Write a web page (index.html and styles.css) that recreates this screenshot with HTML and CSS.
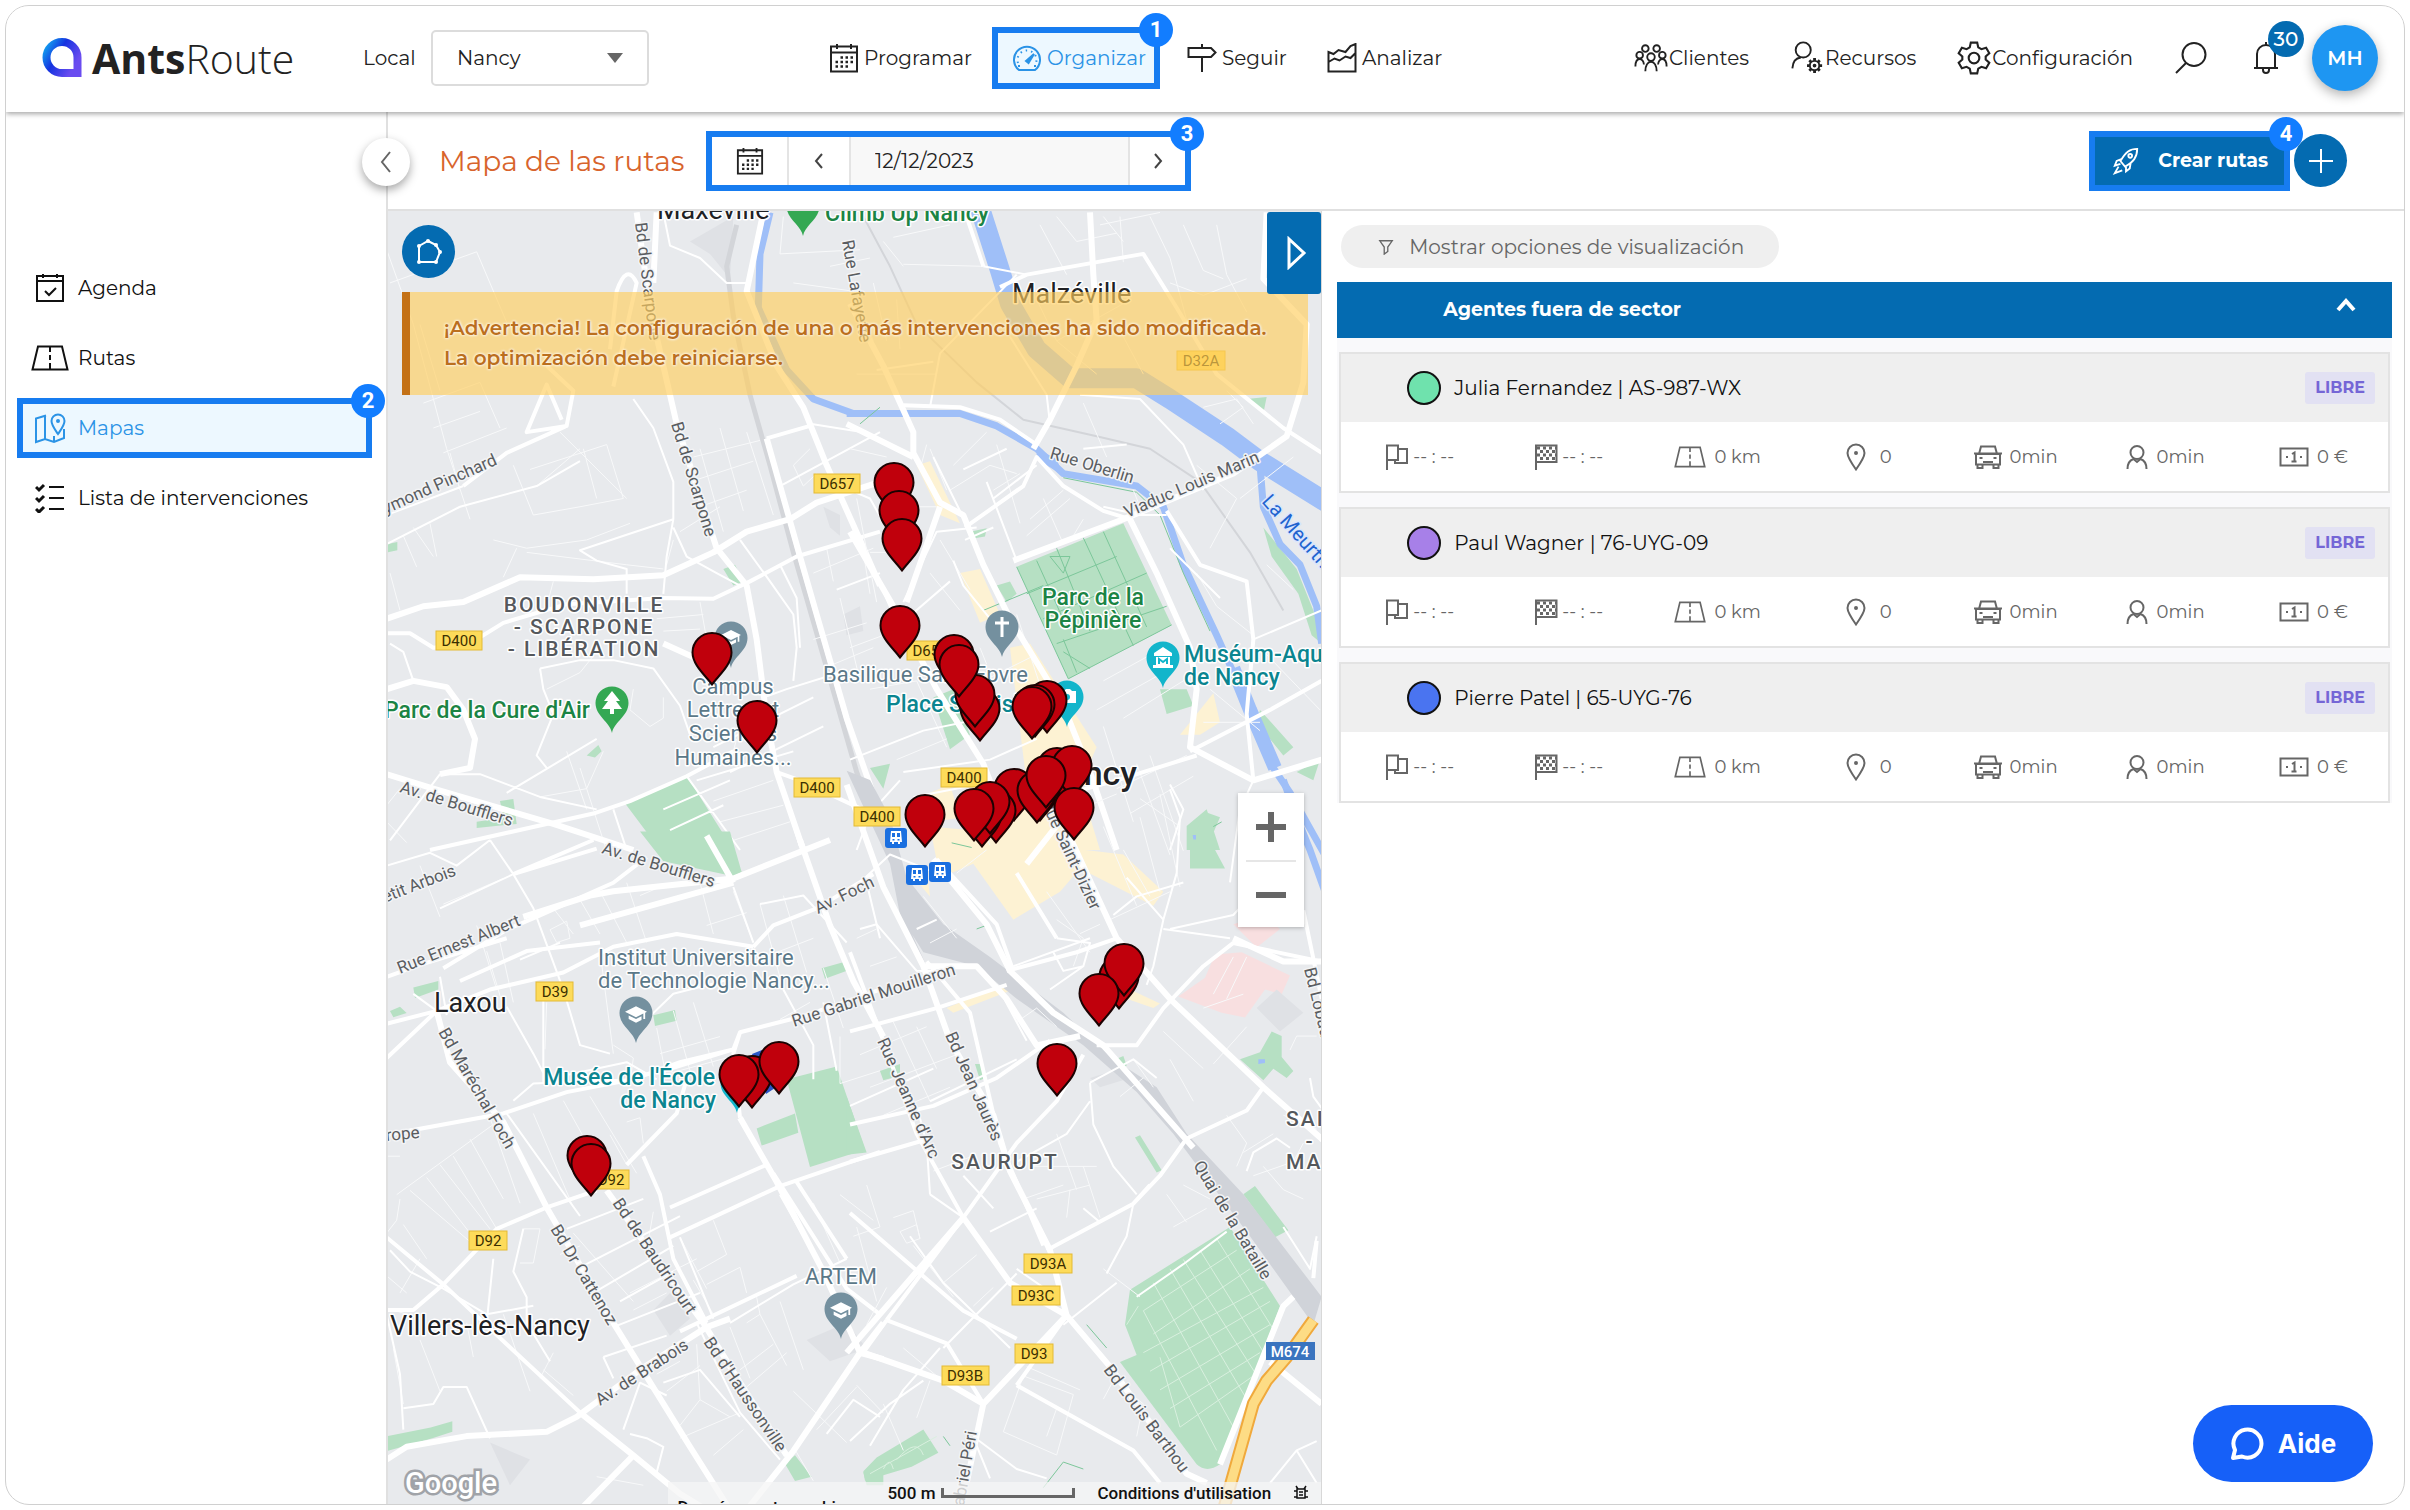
FILE: index.html
```html
<!DOCTYPE html>
<html lang="es">
<head>
<meta charset="utf-8">
<meta name="viewport" content="width=device-width, initial-scale=1">
<title>AntsRoute – Mapa de las rutas</title>
<link rel="stylesheet" href="styles.css">
</head>
<body>
<svg class="defs" aria-hidden="true">
  <defs>
    <linearGradient id="logo-grad" x1="0" y1="0" x2="1" y2="0.6">
      <stop offset="0" stop-color="#12a5f0"/><stop offset=".45" stop-color="#1533e0"/><stop offset="1" stop-color="#6a4cf0"/>
    </linearGradient>
    <symbol id="i-calendar" viewBox="0 0 30 30"><path d="M2 3.500h26v25H2zM2 9.500h26M8 1v5M22 1v5" /><path stroke-dasharray="2.500 2.500" stroke-width="2.500" d="M11.500 14.500h13M6.500 19h18M6.500 23.500h13"/></symbol>
    <symbol id="i-gauge" viewBox="0 0 30 30"><path d="M7 27h16a13 13 0 1 0-16 0z"/><path stroke-dasharray="1.500 4" d="M6 20a9.500 9.500 0 1 1 18 0"/><path d="M14 18l8-7-5.500 9z" fill="currentColor"/><path d="M6 23h2M22 23h2"/></symbol>
    <symbol id="i-sign" viewBox="0 0 30 30"><path d="M1.500 5H24l4.500 4.500L24 14H1.500zM15 1v4M15 14v15"/></symbol>
    <symbol id="i-chart" viewBox="0 0 30 30"><path d="M1.500 28.500V9l5 2 5-4 7 2 5-6 5-2v27.500zM1.500 19l6-3.500 5 2 6-4 5 1.500 5-5"/></symbol>
    <symbol id="i-group" viewBox="0 0 36 30"><circle cx="12" cy="5" r="3.500"/><circle cx="24" cy="5" r="3.500"/><circle cx="6" cy="12" r="3.500"/><circle cx="18" cy="14" r="4"/><circle cx="30" cy="12" r="3.500"/><path d="M1.500 24c0-5 2-8 4.500-8s4.500 3 4.500 6M34.500 24c0-5-2-8-4.500-8s-4.500 3-4.500 6M12 29c0-6 2.500-10 6-10s6 4 6 10"/></symbol>
    <symbol id="i-usergear" viewBox="0 0 34 36"><circle cx="13" cy="9.500" r="8"/><path d="M1.500 29c.5-8 4-11 9-11.500"/><circle cx="25" cy="26" r="5"/><circle cx="25" cy="26" r="1"/><path stroke-width="3" d="M25 18v3M25 31v3M17 26h3M30 26h3M19.500 20.500l2 2M28.500 29.500l2 2M30.500 20.500l-2 2M21.500 29.500l-2 2"/></symbol>
    <symbol id="i-gear" viewBox="0 0 32 32"><circle cx="16" cy="16" r="5"/><path d="M13 1.500h6l1 4.500 3 1.700 4.400-1.400 3 5.200L27 14.500v3l3.400 3-3 5.200L23 24.300 20 26l-1 4.500h-6L12 26l-3-1.700-4.400 1.400-3-5.200 3.400-3v-3l-3.400-3 3-5.200L9 7.700 12 6z"/></symbol>
    <symbol id="i-search" viewBox="0 0 34 34"><circle cx="20" cy="13.500" r="11.500"/><path d="M12 22L2 32"/></symbol>
    <symbol id="i-bell" viewBox="0 0 28 34"><path d="M2 27h24M5 27V13a9 9 0 0 1 18 0v14M14 4V1M11 27v2a3 3 0 0 0 6 0v-2"/></symbol>
    <symbol id="i-agenda" viewBox="0 0 30 30"><path d="M2 3h26v25H2zM2 8h26M8 1v4M22 1v4M10 18l4 4 7-7"/></symbol>
    <symbol id="i-road" viewBox="0 0 38 26"><path d="M7 1.500h24l5.500 23h-35z"/><path d="M19 2v5M19 10v5M19 18v6"/></symbol>
    <symbol id="i-map" viewBox="0 0 32 32"><path d="M12 3.500L2 6.500V30l9-3 9 3 10-4V17M11 4v23M20 30v-6"/><path d="M24 22c-4-6-6.500-9-6.500-13a6.500 6.500 0 0 1 13 0c0 4-2.500 7-6.500 13z"/><circle cx="24" cy="9" r="1"/></symbol>
    <symbol id="i-list" viewBox="0 0 30 30"><path d="M14 4h15M14 15h15M14 26h15"/><path stroke-width="3" d="M1 4l3 3 5-5M1 15l3 3 5-5M1 26l3 3 5-5"/></symbol>
    <symbol id="i-rocket" viewBox="0 0 28 30"><path d="M26 2c-8 0-12 3-18 13l5 6C22 16 26 11 26 2zM9 13l-5 2-2 5 6-2M14 20l0 6 4-3 1-6M6 21l-4 7 8-3"/><circle cx="18.500" cy="9.500" r="2"/></symbol>
    <symbol id="i-filter" viewBox="0 0 16 18"><path stroke-width="1.500" d="M1 2h14L10 9v5l-4 3V9z"/></symbol>
    <symbol id="i-flag" viewBox="0 0 24 26"><path d="M2 26V1.500h11V16H2M13 5h9v14H10v-3"/></symbol>
    <symbol id="i-finish" viewBox="0 0 24 26"><path d="M2 26V1.500h20.500V18H2"/><path stroke-width="3" stroke-dasharray="3 3" d="M3 4h19M6 7.500h16M3 11h19M6 14.500h16"/></symbol>
    <symbol id="i-spot" viewBox="0 0 20 28"><path d="M10 26.500C4 18 1.500 14 1.500 10a8.500 8.500 0 0 1 17 0c0 4-2.500 8-8.500 16.500z"/><circle cx="10" cy="10" r="1"/></symbol>
    <symbol id="i-car" viewBox="0 0 28 24"><path d="M5 9l2-7.500h14L23 9M2 9h24v10.500H2zM0 8.500h28M3.500 20v3h5v-3M19.500 20v3h5v-3M9 17h10M5.500 13h3M19.500 13h3"/></symbol>
    <symbol id="i-person" viewBox="0 0 22 26"><circle cx="11" cy="8.500" r="6.500"/><path d="M1.500 25c0-6 3-9 6-10l3.500 3 3.500-3c3 1 6 4 6 10"/></symbol>
    <symbol id="i-cash" viewBox="0 0 30 20"><path d="M1.500 1.500h27v17h-27zM13 7l2.500-1.500V14M12.500 14.500h5M7 10h2M21 10h2"/></symbol>
    <path id="pin" d="M21 52.500C15 44 1.500 33 1.500 20.500a19.500 19.500 0 0 1 39 0C40.500 33 27 44 21 52.500z" fill="#c0000c" stroke="#1c0202" stroke-width="2"/>
    <symbol id="poi" viewBox="0 0 34 48"><path d="M17 47C15 36 .5 30 .5 17a16.500 16.500 0 0 1 33 0C33.500 30 19 36 17 47z" fill="currentColor"/></symbol>
    <symbol id="cap" viewBox="0 0 24 18"><path fill="#fff" d="M12 0l12 6-2 1v7h-2V8l-8 4L0 6zM4 10l8 4 6-3v4l-6 3-8-4z"/></symbol>
    <symbol id="bus" viewBox="0 0 22 20"><rect width="22" height="20" rx="3" fill="#1a6fe0"/><path fill="#fff" d="M6 3h10l1 11h-2v2h-2v-2H9v2H7v-2H5z"/><path fill="#1a6fe0" d="M7 5h3v4H7zM12 5h3v4h-3zM7.500 11h2v1.500h-2zM12.500 11h2v1.500h-2z"/></symbol>
  </defs>
</svg>

<div class="app">
  <header class="topbar">
    <a class="logo" href="#">
      <svg width="40" height="40" viewBox="0 0 40 40" aria-hidden="true"><path d="M35 35H20A15.500 15.500 0 1 1 35.500 19.500V35z" fill="none" stroke="url(#logo-grad)" stroke-width="8"/></svg>
      <span><b>Ants</b>Route</span>
    </a>
    <label class="local" for="local">Local</label>
    <span class="select"><select id="local"><option>Nancy</option></select></span>
    <nav class="mainnav">
      <a href="#"><svg class="icon i30"><use href="#i-calendar"/></svg>Programar</a>
      <a href="#" class="active marked"><svg class="icon i30"><use href="#i-gauge"/></svg>Organizar<span class="step">1</span></a>
      <a href="#"><svg class="icon i30"><use href="#i-sign"/></svg>Seguir</a>
      <a href="#"><svg class="icon i30"><use href="#i-chart"/></svg>Analizar</a>
    </nav>
    <nav class="sidenav">
      <a href="#"><svg class="icon i34"><use href="#i-group"/></svg>Clientes</a>
      <a href="#"><svg class="icon i34"><use href="#i-usergear"/></svg>Recursos</a>
      <a href="#"><svg class="icon i34"><use href="#i-gear"/></svg>Configuración</a>
      <button class="plain" aria-label="Buscar"><svg class="icon i34"><use href="#i-search"/></svg></button>
      <button class="plain bell" aria-label="Notificaciones"><svg class="icon i34"><use href="#i-bell"/></svg><span class="count">30</span></button>
      <button class="avatar">MH</button>
    </nav>
  </header>

  <div class="body">
    <aside class="sidebar">
      <button class="collapse" aria-label="Contraer menú"><svg width="14" height="24" viewBox="0 0 14 24"><path d="M11 2L3 12l8 10" fill="none" stroke="#666" stroke-width="2"/></svg></button>
      <ul>
        <li><a href="#"><span class="ico"><svg class="icon i30"><use href="#i-agenda"/></svg></span>Agenda</a></li>
        <li><a href="#"><span class="ico"><svg class="icon i38"><use href="#i-road"/></svg></span>Rutas</a></li>
        <li><a href="#" class="active marked"><span class="ico"><svg class="icon i32"><use href="#i-map"/></svg></span>Mapas<span class="step">2</span></a></li>
        <li><a href="#"><span class="ico"><svg class="icon i30"><use href="#i-list"/></svg></span>Lista de intervenciones</a></li>
      </ul>
    </aside>

    <main class="work">
      <div class="toolbar">
        <h1>Mapa de las rutas</h1>
        <div class="datebox marked">
          <button class="cal" aria-label="Calendario"><svg class="icon i28"><use href="#i-calendar"/></svg></button>
          <button class="prev" aria-label="Anterior"><svg width="10" height="16" viewBox="0 0 10 16"><path d="M8 1L2 8l6 7" fill="none" stroke="#444" stroke-width="2"/></svg></button>
          <input type="text" value="12/12/2023" aria-label="Fecha">
          <button class="next" aria-label="Siguiente"><svg width="10" height="16" viewBox="0 0 10 16"><path d="M2 1l6 7-6 7" fill="none" stroke="#444" stroke-width="2"/></svg></button>
          <span class="step">3</span>
        </div>
        <button class="create marked"><svg class="icon i28"><use href="#i-rocket"/></svg>Crear rutas<span class="step">4</span></button>
        <button class="add" aria-label="Añadir"><svg width="24" height="24" viewBox="0 0 24 24"><path d="M12 0v24M0 12h24" stroke="#fff" stroke-width="2"/></svg></button>
      </div>

      <div class="split">
        <section class="map" aria-label="Mapa">
          <svg class="canvas">
            <g transform="translate(-388 -211)">
              <!-- north-west -->
              <g class="tile" transform="translate(380 200) scale(.33333 .41454)">
                <path class="park" d="M735 1455L920 1388 1060 1568 840 1568zM1030 890l35-10 25 40-30 10zM620 1340l35-25 10 15-20 15zM290 1500l80-10-10-40 40-5 10 60-120 10zM22 830l30-5v20l-30 5z"/>
                <path class="shade" d="M930 100l130-60 -10 150-60-60zM1330 740l50 20 0 50-30-20zM1390 1000l50-20 10 60-50 10z"/>
                <path class="canal" d="M1170 30L1140 130 1135 260 1220 410 1300 480 1420 515 1510 515"/>
                <path class="rail" d="M1070 60L1040 160 1060 280 1110 470 1170 640 1240 850 1330 1100 1430 1380 1500 1530"/>
                <path class="thin" d="M20 120l80 180 100 300 70 170M30 200l260-75 90 170M130 490l170-50 60 110M160 550l140-40M190 610l190-60M120 300l60 160M240 700l-30-90M400 640l60 120 140-20 130-20-50-130-230 60M540 560l200 160M470 690l130-90M610 600l40 120M70 810l40 75M100 790l60 70M150 780l20 80M340 820l100 20 180-20 130-40M410 840l-40 70M440 850l300 30 110 10M60 990l-30-90M520 920l-20 60M960 740l140-40M930 680l190-50M940 620l200-40M960 600l70 200M1020 550l70 200M1100 560l80 200M900 800l120-60M850 1040l110-5M830 1010l140-10M960 970l20 90M1050 1360l20-60M1290 600l-50 40 30 50 40-30M1340 840l20 80M1450 850l20 100M1300 900l180-60M1380 960l60 200M1330 1130l150-50M1300 1060l160-40M20 1500l60 50M60 1420l-40 40M600 1370l80 200M560 1330l60 140M880 820l-20 60M1210 40l-10 90 240-10M1240 200l180 20 60 120M1350 160l120-20M500 1180l100-40 40-40M760 1180l-10 50 60 40 40-20v-50M480 1440l140-20 50-90M1000 1450l180-50M1020 1500l190-40M1040 1550l190-50"/>
                <path class="minor" d="M760 480L820 550 880 680 880 770 860 860 850 950M880 770L600 845 650 870 740 890 740 950M20 760L250 690M20 830L240 740 470 690 600 630M480 1130L490 1180 520 1240 470 1340 500 1370M480 1130L600 1110 700 1110 820 1130 900 1220 930 1290M30 1545L180 1385 300 1385 480 1440 650 1470M850 30L870 110 960 140 1040 200 1100 200M30 1070L70 1090 100 1160M880 790L920 860 1010 900 1080 930M1080 820L1170 920 1240 1000 1250 1080 1240 1160M1200 880L1250 960 1260 1080M1380 1140L1220 1180 1150 1200M1000 1320L1300 1200M1050 1380L1330 1270M950 1400L1240 1330M1190 1380L1260 1560M920 1390l160 178M850 1470l200-70M870 1520l160-60M1200 690L1500 560M1450 560L1290 540M1370 940L1500 900M700 1470L740 1568M380 1430L650 1300"/>
                <path class="mid" d="M20 1045L90 1045 160 1080 270 1070 370 1020 560 975 850 960 1000 962 1110 920 1250 860 1500 800M150 1568L640 1480 750 1450 920 1390 1060 1330M690 360L710 220Q740 150 770 200L700 450M250 690L380 610 560 545 580 460 500 400M560 545L440 560 500 445 545 530M1160 575L1290 545M1190 1380L1260 1400 1500 1490"/>
                <path class="major" d="M770 30L800 200 830 330 890 540 1010 840 1100 930 1130 1060 1160 1250 1190 1380 1270 1568M1150 30L1100 220 1190 400 1270 500 1340 640 1440 820 1500 930M20 1010L130 980 250 970 420 910 640 915 850 905 1000 850 1100 800 1230 770 1310 730 1500 680M20 1385L160 1420 520 1505 760 1568M20 1180L100 1160 200 1175 250 1230 285 1300 270 1370 180 1385M830 30L820 200M850 1070L960 1110M1160 575L1260 860 1310 1000 1400 1250 1500 1480"/>
              </g>
              <!-- north-east -->
              <g class="tile" transform="translate(850 200) scale(.33333 .41454)">
                <path class="park" d="M500 885L820 780 965 1025 655 1155zM250 1200l60-20 50 110-60 35zM1190 480l60-5-10 40zM360 800l50-8-5 20-40 5zM440 930l40-10 20 30-30 20zM1240 790l40 40 60 60 60 120 15 60-30-20-40-100-80-90zM930 1180l80 0 20 40-80 20zM1230 1230l100 90-30 20-80-80zM1010 1510l60-40 40 98-100 0zM1340 1380l70-30-20 50zM60 1370l60-10-20 60z"/>
                <path class="shop" d="M200 640l40-10 90 150-60-20zM330 900l60-10 60 110-60 20zM480 1080l60-10 200 250-50 90 60 158-380 0-40-100 200-60zM990 1290l100-100 20 70-60 30zM240 1430l60-20 30 80-80 10z"/>
                <path class="river" d="M390 20L450 170 480 250 560 360 660 430 860 430 960 480 1130 570 1230 630 1430 730"/>
                <path class="canal" d="M-10 515L180 515 330 515 440 545 560 600 640 660 860 690 940 740 1000 880 1100 1050 1200 1230 1270 1370 1320 1430 1430 1588M1230 640L1240 740 1290 830 1350 880 1400 980 1415 1070"/>
                <path class="canal wide" d="M1150 1130L1200 1230 1275 1370"/>
                <path class="water" d="M560 600l60 25 20 40-80-40z"/>
                <path class="green" d="M640 670L860 705 930 760 1000 900 1080 1040M500 885L655 1155 965 1025M560 870l90 160M620 840l100 200M700 815l150 260M760 800l130 230M530 950l270-90M580 1010l310-110M620 1070l330-90M600 860l60 0-20 40zM640 1090l80 40M400 990l180-60M640 1060l40 80M30 540l60-40"/>
                <path class="rail-thin" d="M40 40L120 160 200 300 380 440 520 530 740 570 900 600 1050 680 1200 850 1300 990"/>
                <path class="thin" d="M130 90l170-30M160 155l240 5M100 100l60 60M570 60l80 120M620 40l60 60 120-20M760 40l60 60M750 60l180-30M820 150l-10-110M900 40l60 100 60 180M960 200l100 30 130-40M560 240l60 100 120 80M620 340l200-90M800 300l80 120M1100 60l30 120M1000 60l60 110 60 20M1130 180l60 90M1060 500l100-20 50 60M1130 460l50 40-70 40M20 420l240 0M70 200l40 140M140 240l10 120M230 590l-20 60M240 600l50 100M310 640l100-80M300 700l120-60 80 20M430 700l80-40M510 780l-70-190M640 700l-100 70M580 720l60 110M660 720l-130 90M700 770l-30 40M700 490l70 130M1040 640l120 80-80 120M1170 720l160-100M390 1080l20 40M270 820l90 120M240 900l90 90M20 720l60 250M0 600l110 20M160 740l100 0M60 850l100 0M0 1080l200-60M60 1180l140-20 90 160M140 1350l150-50M760 1160l180-80M740 1230l200-90M760 1270l90 230M820 1250l200-100M860 1360l100 220M900 1340l100 230M800 1420l210-80M840 1480l190-90M1080 1180l150 100M1060 1260l170 0M850 700l30 60M1040 900l60 80 110 70M1230 1080l180 150M1330 940l-80-60M550 1100l-150 60M500 1000l70 170"/>
                <path class="minor" d="M400 160L530 180M240 500L270 370 500 180M80 410L250 390M345 820L430 790M330 750L250 620M410 680L500 870M470 600L340 650M600 540L590 470 480 330M690 470L870 480 1000 590 1060 700M0 700L60 720 150 850M160 970L260 800 380 790M300 920L170 1010M310 870L340 930 430 1020M430 720L560 640M0 1350L220 1280 400 1250M160 1380L420 1350 560 1300M190 1440L450 1400M20 1568L60 1480 150 1400M960 1410L1000 1470 960 1568M1210 1400L1170 1470M1210 1060L1415 990M700 600L830 590M950 760L870 760 760 740M0 760L130 1000M960 840L1110 960"/>
                <path class="mid" d="M345 790L520 690 560 620 640 690 760 750 840 770M160 495L330 500 450 530 560 590M950 750L1050 880 1190 920 1210 1060M450 210L530 180 880 130 980 260 1100 420 1300 550 1415 610M400 160L350 40M1020 1330L1260 1230 1415 1160M1040 1340L800 1400 620 1440M1210 1400L1190 1240 1210 1060"/>
                <path class="major" d="M550 600L600 530 680 400 740 290 730 180 720 30M490 870L820 770 1150 660 1310 570 1360 440 1370 300 1240 190 1250 30M840 770L920 900 1020 1080 1040 1180 1020 1320 1210 1400 1415 1350M0 250L100 400 190 560 190 610 270 730 340 760 400 880 480 1010 640 1220 720 1380 800 1568M-10 540L190 620M0 800L130 980 260 1180 400 1360 500 1568M170 970L270 740"/>
              </g>
              <!-- south-west -->
              <g class="tile" transform="translate(380 840) scale(.33333 .4273)">
                <path class="park" d="M780 -20L1050 -20 1085 75 1060 85 850 50zM1220 560L1370 530 1455 725 1290 765zM1130 675l115-35 10 45-110 30zM100 345l75-15 0 20-70 20zM30 400l30-10 20 15-40 10zM820 410l65-12 5 25-65 12zM1325 300l70-15 10 20-70 20zM22 1395l130-20 65-15v25l-60 15-135 30zM1215 1460l30-20 50 50-50 10zM1450 1480l60-40v70l-50 0z"/>
                <path class="shade" d="M820 1100l50-40 60 60-60 40zM1280 1170l120-40 60 60-110 30zM330 1410l120 40-60 60z"/>
                <path class="thin" d="M90 820L210 900 270 940M140 790l130 130M180 760l150 150M220 740l130 170M270 700l100 140M50 830L350 660M330 650l90 200M20 740l40 0M60 840l-10 50-30 30M520 160l60 60M600 140l60 80M740 100l60 140M660 120l80 120M510 210l50-20 10 40-40 10zM360 240l40 140M320 260l50 130M120 60l60 120M190 150l180-60M290 200l60 150M660 260l40 240M780 130l60-20M960 100l40 120M1060 120l60 120M980 200l120-30M840 500l180-40M850 550l190-40M830 440l30 120M880 400l50 140M940 380l60 150M1140 150l70 200M1210 130l70 180M1100 290l200-60M1380 460v110l120-30M1330 300l60 140M1200 420l90-40M500 380l-5 110M700 480l60 30-10 60M550 610l150 210M460 640l120 220M630 600l140 180M740 660l40-10 10 60M690 690l50 70M20 1020l60 40M60 1060l60-80M40 1100l80 20M70 900l70 80M430 910l50 0-20 80-40 0M580 920l180 160M540 970l60-20M900 930l80 120M1000 890l40 80-90 40M940 1030l60 80M980 1040l100-40 20 60M760 1100l100-40M750 1060l200-80M1100 1130l40-20 -10-40M1050 1140l60 120M1140 1110l80 120M1200 1080l70 160M1240 1290l160 120M1100 1280l120-80M1080 1240l100-60M950 1180l10 130-60 60M960 1310l90 40M40 1190l30 130M120 1170l60 120M260 1130l20 80M370 1110l80 180M490 1240l90 60M520 1200l-40 60M830 1250l70-30M860 1290l100-60M900 1400l180-60M1000 1440l90-60M650 1490l140 20M800 960l20-90M1380 830l100 60M1300 850l80 140M1240 1420l60 80M1310 1380l120-100"/>
                <path class="minor" d="M20 60L150 30 230 60 330 0M330 0L400 80 460 160 550 350 600 480 690 500M180 160L400 80 640 0M200 410L180 320M380 390L460 500 500 560 740 520 830 560M490 370L490 570M100 360L170 400M400 610L460 570 760 560M380 640L600 880M30 960L90 1010 190 1050 320 1110 460 1090M340 980L320 1130M430 910L400 1010 440 1070 440 1130 510 1220M560 910L790 840M600 1000L900 880M640 1060L880 950M720 1080L880 1010M700 1140L960 1060M900 930L1000 1120M1200 830L1330 1010M950 1130L1080 1340 1200 1450M850 1270L960 1240 1080 1350M70 1330L160 1320 190 1280 260 1280 330 1400M730 1380L780 1270 860 1300M750 1390L800 1400 850 1420 830 1480M670 1210L860 1160M670 1210L700 1260M20 1110L60 1250 70 1380M1050 1130L1240 1040 1400 980M1210 350L1300 480 1300 560M1060 110L1120 240M1140 150L1270 130 1400 240M1460 100L1500 230M1330 380L1370 540M800 420L880 360 1080 320M420 280L540 240M1340 1390L1420 1310 1500 1350"/>
                <path class="mid" d="M20 430L170 400 330 350 550 310 700 250 890 220 1120 250M240 330L440 260 660 240M190 300L380 210 470 180 700 100 800 40M20 690L370 640 560 590 760 560 900 520 1060 490 1080 450 1280 410 1500 350M1120 250L1180 200 1310 160 1480 80M20 510L170 400M740 760L890 640 920 560M790 740L840 830 880 980 980 1130M20 930L190 1040 380 1180 600 1340M20 1100L100 1100 190 1040 350 910 500 860 650 820M870 860L1160 760M870 930L1200 810 1500 730M900 1150L1250 1020M20 320L130 290 380 230M400 80L640 0M650 20L400 80M850 540L1060 490M1080 450L1060 500 1080 650M1180 780L1400 1050 1500 1110M1250 800L1400 980"/>
                <path class="major" d="M170 400L210 520 370 660 500 860 700 1130 930 1420 1050 1568M680 820L800 950 970 1130 1080 1270 1220 1440M1080 650L1190 800 1330 1010 1440 1200 1510 1215M1100 1568L1240 1430 1440 1200 1510 1130M600 1340L760 1440 900 1530 980 1568M20 1450L80 1420 260 1395 500 1385 590 1350 780 1240 980 1140 1050 1120M430 180L630 130 700 120 1060 90 1350 0M600 200L1060 100M1260 0L1350 200 1420 330 1510 460M980 -10L1060 100M600 1568L760 1440"/>
              </g>
              <!-- south-east -->
              <g class="tile" transform="translate(850 780) scale(.33333 .46556)">
                <path class="park" d="M840 1095L1140 960 1290 1130 1110 1470Q1070 1490 1040 1470L810 1250 860 1235 825 1170zM1180 890l35-18 100 95-40 15zM1170 600l60-15 35-45 30 10 0 45 35 30-20 15-40-20-30 25zM1020 130l50-60 40 10-30 50 45 60-105 0zM855 768l15-5 65 75-15 5zM-10 680l60 120-60 5zM40 1485l40-30 140-60 45 50-80 30-140 30zM375 610l20 0 10 30-15 5zM780 605l40-12 10 20-15 10zM90 625l60-15v25l-50 10z"/>
                <path class="hosp" d="M985 465l80-40 30-50 80-5 145 50-25 40-50-10-60 60-70-10zM1150 310l90-20 50 30-70 40z"/>
                <path class="shop" d="M240 100l160 10 120-60 120 0 60 100 120 10 120 80-30 30-220-80-60 50-140 60-120-120-100 30zM290 490l200-60 0 20-180 50zM840 450l90 30-20 10-80-20zM170 190l60 0 10 60z"/>
                <path class="shade" d="M720 640l90-20 30 20-90 20zM1220 490l60-40 80 50-70 40z"/>
                <path class="yard" d="M-10 -20L60 0 120 80 170 210 280 310 420 380 640 500 790 600 920 660 1010 760 1180 890 1415 1110 1390 1170 1200 980 970 760 860 670 700 570 500 470 380 400 220 370 150 290 120 180zM160 290l70 110-12 0-80-110z"/>
                <path class="canal" d="M1300 0L1340 80 1380 150 1430 250"/>
                <path class="water" d="M1225 600l20 0 0 8-20 2zM1028 118l10 0 0 10-8 0z"/>
                <path class="parklines" d="M960 1050L1190 1330M1000 1030L1230 1290M1050 1010L1250 1240M1100 985L1270 1180M910 1080L1150 1390M880 1140L1100 1440M930 1240L990 1390M880 1140L1160 1010M910 1190L1200 1050M880 1230L1240 1090M900 1270L1260 1120M930 1310L1260 1170M960 1350L1230 1230M990 1390L1210 1280M830 1170L865 1130M60 1490l200-80M100 1480q20-30 30 0M140 1460q60-50 80-10"/>
                <path class="green" d="M380 320l30-8M305 135l60 10M580 1520l60-55 60 15M280 1410l20 20M1090 100l25-10M710 1170l60 50"/>
                <path class="thin" d="M20 340l60-20M60 400l80-20M130 520l110 170M200 530l60 90M30 590l200-60M60 660l260-70M100 720l200-60M250 840l110-30M50 870l40 90-80 20M130 940l60-15 20 60M150 970l50-15 10 30-40 10zM190 1000l120 110M280 1080l100-60M520 900l120-30M660 880l-10 60M700 830l50 110M540 830l200 0M620 760l60 120M560 900l160-30M500 520l60-30 60 40M590 240l130 130M640 130l60 70M760 100l100 170M820 150l80 100M870 80l60 160M690 330l60-20M780 300l180-60M870 40l120 60M620 300l80 40-30 60M700 60l100-30M930 30l60 200M320 200l90-50M220 250l100 90M240 350l80-30M360 50l60 90M1000 870l80 30M950 890l60 60M970 960l100-40M1130 720l60 60-30 50M1180 800l90-40M1210 850l120-30 30-40M1060 490l120-30M1090 460l60-80M1190 380l-60 90M1300 720l100 30M1240 830l60 50 60 20M1320 580l20-30 60 0M460 1400l60-120 150 40-50 130zM530 1260l160 50M760 1330l30-40 90 50-20 70M620 1350l-30 60M240 1290l-40 80M100 1340l60 100M20 1300l80 60M160 1220l100 60M50 1170l60-80M20 960l60 160M370 1130l60-40M850 600l60 60M960 600l70 90M880 640l-70 40M940 540l120 80M1190 530l-100 80M760 1050l110 60"/>
                <path class="minor" d="M0 240L120 160 260 200M30 320L80 310 200 410 280 410M260 300L200 320M600 450L700 400M610 370L640 410 700 400 720 350 620 340M490 400L720 340M830 210L940 300 980 200 990 80 960 20M940 300L910 400 890 440M790 290L860 250 1000 220M960 320L1150 290 1240 220M720 650L730 740 790 830 860 890M720 650L850 600 920 640M850 910L830 980 770 1060M240 890L340 940M240 890L230 780 200 700M420 970L560 920M500 820L650 760 720 690M340 850L430 920M0 700L250 620M240 690L500 600M440 440L530 560M640 1170L800 1080M280 1220L500 1060M180 980L280 1080 480 1220M640 1120L500 1050M380 1430L420 1500M270 1220L160 1310 60 1430M0 1420L120 1340 220 1290M370 1410L500 1480 590 1500M700 920L750 950M860 1110L1000 1040 1130 970M1400 1420L1340 1440 1260 1510M1340 1440L1400 1510M1190 840L1210 800 1280 770 1320 790M940 320L1140 340M1140 220L1170 60M1380 640L1390 680 1430 720M1300 960L1380 1050 1400 980"/>
                <path class="mid" d="M0 370L100 560 200 760 340 940M230 390L360 500 450 780 580 1000M0 740L250 700 440 640 600 560M0 820L240 770M0 540L260 490 470 440M590 1010L850 910 930 850 1010 770 1190 710 1240 660M110 1160L340 940 500 780 620 690 700 590M850 910L900 870M740 570L860 570 940 490 1060 400 1150 350 1415 390M470 410L680 370 800 340M1360 280L1415 470M500 1300L850 1440 930 1510M500 1300L640 1160M40 1230L110 1160M110 1160L290 1210 400 1340M1390 1070L1400 990M500 200L620 340M260 170L440 310 490 410M0 930L340 1140 500 1200"/>
                <path class="major" d="M-10 10L100 230 220 400 300 560 430 720 480 840 600 1010 650 1150 780 1260 1010 1490 1070 1510M250 170L410 310 480 410 610 500 760 570 920 700 1030 790M530 180L640 80M600 30L800 340 960 470 1240 660 1430 780M220 400L380 400 470 470 560 570 690 550M-10 1230L340 940M340 940L480 1080 650 1150 400 1340 350 1510M40 1230L280 1290 400 1340M1110 1470L1300 1130 1330 1110M1150 340L1300 390 1430 390M1260 1250L1415 1340"/>
                <path class="mway" d="M1120 1568L1210 1340 1250 1290 1310 1240 1390 1160"/>
                <path class="mway-in" d="M1120 1568L1210 1340 1250 1290 1310 1240 1390 1160"/>
              </g>

              <g color="#74909f">
                <use href="#poi" x="714" y="621" width="34" height="48"/><use href="#cap" x="721" y="630" width="20" height="15"/>
                <use href="#poi" x="985" y="610" width="34" height="48"/><path d="M1002 617v20M995 623h14" stroke="#fff" stroke-width="3"/>
                <use href="#poi" x="619" y="996" width="34" height="48"/><use href="#cap" x="625" y="1006" width="22" height="17"/>
                <use href="#poi" x="824" y="1292" width="34" height="48"/><use href="#cap" x="830" y="1302" width="22" height="17"/>
              </g>
              <g color="#34a853">
                <use href="#poi" x="595" y="686" width="34" height="48"/><path d="M612 691l8 10h-4l6 8h-8v5h-4v-5h-8l6-8h-4z" fill="#fff"/>
                <use href="#poi" x="786" y="189" width="34" height="48"/>
              </g>
              <g color="#12b5cb">
                <use href="#poi" x="1146" y="641" width="34" height="48"/><path d="M1154 653l9-6 9 6v3h-18zM1153 665h20v3h-20zM1156 657h14v8h-14z" fill="#fff"/><path d="M1159 664v-5l4 3 4-3v5" fill="none" stroke="#12b5cb" stroke-width="2"/>
                <use href="#poi" x="1050" y="680" width="34" height="48"/><path d="M1060 691h4l2-2h4l2 2h4v12h-16z" fill="#fff"/><circle cx="1067" cy="697" r="3" fill="#12b5cb"/>
                <use href="#poi" x="720" y="1066" width="34" height="48"/>
              </g>
              <use href="#bus" x="885" y="828" width="22" height="20"/><use href="#bus" x="906" y="865" width="22" height="20"/><use href="#bus" x="929" y="862" width="22" height="20"/>

              <g class="street">
                <text transform="translate(635 223) rotate(83)">Bd de Scarpone</text>
                <text transform="translate(671 424) rotate(73)">Bd de Scarpone</text>
                <text transform="translate(842 241) rotate(80)">Rue Lafayette</text>
                <text class="end" transform="translate(498 464) rotate(-24)">Rue Raymond Pinchard</text>
                <text transform="translate(399 792) rotate(17)">Av. de Boufflers</text>
                <text transform="translate(601 853) rotate(17)">Av. de Boufflers</text>
                <text class="end" transform="translate(457 875) rotate(-21)">Rue du Petit Arbois</text>
                <text transform="translate(400 974) rotate(-22)">Rue Ernest Albert</text>
                <text transform="translate(818 914) rotate(-26)">Av. Foch</text>
                <text transform="translate(438 1032) rotate(60)">Bd Maréchal Foch</text>
                <text class="end" transform="translate(420 1138) rotate(-5)">Av. de l'Europe</text>
                <text transform="translate(550 1229) rotate(59)">Bd Dr Cattenoz</text>
                <text transform="translate(612 1203) rotate(56)">Bd de Baudricourt</text>
                <text transform="translate(600 1406) rotate(-33)">Av. de Brabois</text>
                <text transform="translate(703 1342) rotate(56)">Bd d'Haussonville</text>
                <text transform="translate(794 1027) rotate(-18)">Rue Gabriel Mouilleron</text>
                <text transform="translate(877 1041) rotate(66)">Rue Jeanne d'Arc</text>
                <text transform="translate(945 1035) rotate(66)">Bd Jean Jaurès</text>
                <text class="end" transform="translate(1091 911) rotate(65)">Rue Saint-Dizier</text>
                <text transform="translate(1193 1165) rotate(59)">Quai de la Bataille</text>
                <text transform="translate(1103 1370) rotate(53)">Bd Louis Barthou</text>
                <text class="end" transform="translate(977 1432) rotate(-80)">Rue Gabriel Péri</text>
                <text transform="translate(1049 458) rotate(17)">Rue Oberlin</text>
                <text transform="translate(1127 518) rotate(-23)">Viaduc Louis Marin</text>
                <text transform="translate(1304 969) rotate(76)">Bd Lobau</text>
                <text class="riv" transform="translate(1261 502) rotate(48)">La Meurthe</text>
              </g>
              <g class="town">
                <text x="657" y="219">Maxéville</text><text x="1012" y="303">Malzéville</text>
                <text x="434" y="1012">Laxou</text><text x="390" y="1335">Villers-lès-Nancy</text>
                <text class="city" x="1137" y="785">Nancy</text>
              </g>
              <g class="area">
                <text x="584" y="612">BOUDONVILLE</text><text x="584" y="634">- SCARPONE</text><text x="584" y="656">- LIBÉRATION</text>
                <text x="1005" y="1169">SAURUPT</text><text class="start" x="1286" y="1126">SAINT</text><text x="1310" y="1148">-</text><text class="start" x="1286" y="1169">MAX</text>
              </g>
              <g class="place slate">
                <text class="mid-a" x="733" y="694">Campus</text><text class="mid-a" x="733" y="717">Lettres et</text><text class="mid-a" x="733" y="741">Sciences</text><text class="mid-a" x="733" y="765">Humaines...</text>
                <text x="823" y="682">Basilique Saint-Epvre</text>
                <text x="598" y="965">Institut Universitaire</text><text x="598" y="988">de Technologie Nancy...</text>
                <text class="mid-a" x="841" y="1284">ARTEM</text>
              </g>
              <g class="place leaf">
                <text class="end" x="590" y="718">Parc de la Cure d'Air</text><text x="825" y="221">Climb Up Nancy</text>
                <text class="mid-a" x="1093" y="605">Parc de la</text><text class="mid-a" x="1093" y="628">Pépinière</text>
              </g>
              <g class="place teal">
                <text x="886" y="712">Place Stanislas</text><text x="1184" y="662">Muséum-Aquarium</text><text x="1184" y="685">de Nancy</text>
                <text class="end" x="715" y="1085">Musée de l'École</text><text class="end" x="716" y="1108">de Nancy</text>
              </g>
              <g class="shield">
                <rect x="814" y="474" width="46" height="19"/><text x="837" y="489">D657</text>
                <rect x="436" y="631" width="46" height="19"/><text x="459" y="646">D400</text>
                <rect x="794" y="778" width="46" height="19"/><text x="817" y="793">D400</text>
                <rect x="854" y="807" width="46" height="19"/><text x="877" y="822">D400</text>
                <rect x="941" y="768" width="46" height="19"/><text x="964" y="783">D400</text>
                <rect x="907" y="641" width="46" height="19"/><text x="930" y="656">D657</text>
                <rect x="1177" y="351" width="48" height="19"/><text x="1201" y="366">D32A</text>
                <rect x="536" y="982" width="37" height="19"/><text x="555" y="997">D39</text>
                <rect x="592" y="1170" width="37" height="19"/><text x="611" y="1185">D92</text>
                <rect x="469" y="1231" width="38" height="19"/><text x="488" y="1246">D92</text>
                <rect x="1024" y="1254" width="48" height="19"/><text x="1048" y="1269">D93A</text>
                <rect x="1012" y="1286" width="48" height="19"/><text x="1036" y="1301">D93C</text>
                <rect x="1015" y="1344" width="38" height="19"/><text x="1034" y="1359">D93</text>
                <rect x="942" y="1366" width="47" height="19"/><text x="965" y="1381">D93B</text>
              </g>
              <g class="shield blue"><rect x="1266" y="1342" width="49" height="18"/><text x="1290" y="1357">M674</text></g>
              <path d="M752 1054l10-4 16 36-12 8z" fill="#2a56c6"/>

              <g class="pins">
                <use href="#pin" x="691" y="632"/><use href="#pin" x="736" y="700"/>
                <use href="#pin" x="873" y="462"/><use href="#pin" x="878" y="490"/><use href="#pin" x="881" y="518"/><use href="#pin" x="879" y="605"/>
                <use href="#pin" x="933" y="634"/><use href="#pin" x="959" y="688"/><use href="#pin" x="954" y="674"/><use href="#pin" x="938" y="644"/>
                <use href="#pin" x="1026" y="680"/><use href="#pin" x="1014" y="684"/><use href="#pin" x="1011" y="686"/>
                <use href="#pin" x="1036" y="747"/><use href="#pin" x="1051" y="745"/><use href="#pin" x="993" y="768"/><use href="#pin" x="1019" y="768"/><use href="#pin" x="1016" y="770"/><use href="#pin" x="1025" y="755"/><use href="#pin" x="1053" y="787"/>
                <use href="#pin" x="975" y="790"/><use href="#pin" x="961" y="794"/><use href="#pin" x="969" y="781"/><use href="#pin" x="953" y="788"/><use href="#pin" x="904" y="794"/>
                <use href="#pin" x="1098" y="956"/><use href="#pin" x="1103" y="943"/><use href="#pin" x="1078" y="973"/><use href="#pin" x="1036" y="1043"/>
                <use href="#pin" x="731" y="1055"/><use href="#pin" x="718" y="1054"/><use href="#pin" x="758" y="1041"/>
                <use href="#pin" x="566" y="1135"/><use href="#pin" x="570" y="1143"/>
              </g>
            </g>
          </svg>

          <button class="draw" aria-label="Dibujar zona"><svg width="26" height="26" viewBox="0 0 26 26"><path d="M3 7l9-5 8 4 4 7-4 10H3z" fill="none" stroke="#fff" stroke-width="2"/><g fill="#fff"><circle cx="3" cy="7" r="2"/><circle cx="12" cy="2" r="2"/><circle cx="20" cy="6" r="2"/><circle cx="24" cy="13" r="2"/><circle cx="20" cy="23" r="2"/><circle cx="3" cy="23" r="2"/></g></svg></button>
          <button class="expand" aria-label="Ampliar mapa"><svg width="20" height="34" viewBox="0 0 20 34"><path d="M2 3l15 14L2 31z" fill="none" stroke="#fff" stroke-width="3"/></svg></button>
          <p class="warning" role="alert">¡Advertencia! La configuración de una o más intervenciones ha sido modificada.<br>La optimización debe reiniciarse.</p>
          <div class="zoom">
            <button aria-label="Acercar"><svg width="30" height="30" viewBox="0 0 30 30"><path d="M15 0v30M0 15h30" stroke="#666" stroke-width="6"/></svg></button>
            <button aria-label="Alejar"><svg width="30" height="30" viewBox="0 0 30 30"><path d="M0 15h30" stroke="#666" stroke-width="6"/></svg></button>
          </div>
          <span class="google">Google</span>
          <div class="credits">
            <span class="data">Données cartographiques</span>
            <span>500 m</span><span class="scale"></span><a href="#">Conditions d'utilisation</a>
            <svg width="16" height="16" viewBox="0 0 16 16" aria-hidden="true"><path d="M4 4h8v9H4zM5 4L3 1M11 4l2-3M1 6h3M1 12h3M12 6h3M12 12h3M6 7h4M6 10h4" fill="none" stroke="#111" stroke-width="1.500"/></svg>
          </div>
        </section>

        <section class="panel">
          <button class="options"><svg class="icon i16"><use href="#i-filter"/></svg>Mostrar opciones de visualización</button>
          <div class="group">
            <button class="grouphead" aria-expanded="true">Agentes fuera de sector<svg width="20" height="14" viewBox="0 0 20 14"><path d="M2 12l8-9 8 9" fill="none" stroke="#fff" stroke-width="4"/></svg></button>
            <article class="card">
              <header><span class="dot green-dot"></span><h2>Julia Fernandez | AS-987-WX</h2><span class="free">LIBRE</span></header>
              <ul><li><svg class="icon i24"><use href="#i-flag"/></svg>-- : --</li><li><svg class="icon i24"><use href="#i-finish"/></svg>-- : --</li><li class="sp"><svg class="icon i32"><use href="#i-road"/></svg>0 km</li><li class="wide-sp"><svg class="icon i28"><use href="#i-spot"/></svg>0</li><li class="sp"><svg class="icon i28"><use href="#i-car"/></svg>0min</li><li class="sp"><svg class="icon i24"><use href="#i-person"/></svg>0min</li><li class="sp"><svg class="icon i30"><use href="#i-cash"/></svg>0 €</li></ul>
            </article>
            <article class="card">
              <header><span class="dot purple-dot"></span><h2>Paul Wagner | 76-UYG-09</h2><span class="free">LIBRE</span></header>
              <ul><li><svg class="icon i24"><use href="#i-flag"/></svg>-- : --</li><li><svg class="icon i24"><use href="#i-finish"/></svg>-- : --</li><li class="sp"><svg class="icon i32"><use href="#i-road"/></svg>0 km</li><li class="wide-sp"><svg class="icon i28"><use href="#i-spot"/></svg>0</li><li class="sp"><svg class="icon i28"><use href="#i-car"/></svg>0min</li><li class="sp"><svg class="icon i24"><use href="#i-person"/></svg>0min</li><li class="sp"><svg class="icon i30"><use href="#i-cash"/></svg>0 €</li></ul>
            </article>
            <article class="card">
              <header><span class="dot blue-dot"></span><h2>Pierre Patel | 65-UYG-76</h2><span class="free">LIBRE</span></header>
              <ul><li><svg class="icon i24"><use href="#i-flag"/></svg>-- : --</li><li><svg class="icon i24"><use href="#i-finish"/></svg>-- : --</li><li class="sp"><svg class="icon i32"><use href="#i-road"/></svg>0 km</li><li class="wide-sp"><svg class="icon i28"><use href="#i-spot"/></svg>0</li><li class="sp"><svg class="icon i28"><use href="#i-car"/></svg>0min</li><li class="sp"><svg class="icon i24"><use href="#i-person"/></svg>0min</li><li class="sp"><svg class="icon i30"><use href="#i-cash"/></svg>0 €</li></ul>
            </article>
          </div>
        </section>
      </div>
    </main>
  </div>
  <button class="help"><svg width="34" height="34" viewBox="0 0 34 34" aria-hidden="true"><path d="M3 31l2-8A14 14 0 1 1 12 29.500z" fill="none" stroke="#fff" stroke-width="4" stroke-linejoin="round"/></svg>Aide</button>
</div>
</body>
</html>
```
FILE: styles.css
```css
* { box-sizing: border-box; }
body { margin: 0; padding: 5px; background: #fff; color: #222; font: 20px/28px Montserrat, Inter, sans-serif; }
button, input, select { font: inherit; color: inherit; border: 0; background: none; padding: 0; margin: 0; cursor: pointer; }
a { color: inherit; text-decoration: none; }
ul { list-style: none; margin: 0; padding: 0; }
h1, h2, p { margin: 0; font-weight: 400; }
.defs { position: absolute; width: 0; height: 0; }
.icon { display: block; flex: none; fill: none; stroke: currentColor; stroke-width: 2; }
.i16 { width: 16px; height: 16px; }
.i24 { width: 24px; height: 26px; }
.i28 { width: 28px; height: 28px; }
.i30 { width: 30px; height: 30px; }
.i32 { width: 32px; height: 32px; }
.i34 { width: 34px; height: 34px; }
.i38 { width: 38px; height: 26px; }

.app { position: relative; display: flex; flex-direction: column; min-height: calc(100vh - 10px); border: 1px solid #d0d0d0; border-radius: 24px; overflow: hidden; }
.marked { position: relative; border: 6px solid #177cf0; }
.step { position: absolute; z-index: 5; top: -20px; right: -19px; width: 34px; height: 34px; border-radius: 50%; background: #127dff; color: #fff; font: 700 22px/34px Roboto, sans-serif; text-align: center; }

/* top bar */
.topbar { position: relative; z-index: 3; display: flex; align-items: center; height: 106px; padding: 0 26px 2px 36px; background: #fff; box-shadow: 0 2px 5px rgba(0,0,0,.35); }
.logo { display: flex; align-items: center; gap: 10px; width: 321px; font: 300 41px/48px "Open Sans", sans-serif; color: #222; }
.logo b { font-weight: 700; }
.local { width: 68px; }
.select { position: relative; width: 218px; }
.select::after { content: ""; position: absolute; right: 26px; top: 23px; border: 8px solid transparent; border-top: 10px solid #666; border-bottom: 0; pointer-events: none; }
.select select { appearance: none; width: 100%; height: 56px; padding: 0 24px; border: 2px solid #dcdcdc; border-radius: 5px; }
.mainnav, .sidenav { display: flex; align-items: center; }
.mainnav { margin-left: 160px; }
.mainnav a { display: flex; align-items: center; gap: 5px; height: 62px; padding: 0 20px; }
.mainnav a.active { margin-right: 7px; padding: 0 8px 0 14px; }
a.active { background: #edf8ff; color: #2b93e6; }
.sidenav { margin-left: auto; gap: 41px; }
.sidenav a { display: flex; align-items: center; gap: 1px; }
.bell { position: relative; margin-right: -12px; }
.count { position: absolute; left: 19px; top: -20px; width: 36px; height: 36px; border-radius: 50%; background: #046bb1; color: #fff; font-weight: 500; line-height: 36px; text-align: center; }
.avatar { width: 66px; height: 66px; border-radius: 50%; background: #1e96f2; color: #fff; font-weight: 600; box-shadow: 0 4px 12px rgba(0,0,0,.3); }

.body { flex: 1; display: flex; }
/* sidebar */
.sidebar { position: relative; flex: none; width: 382px; padding: 146px 14px 0 11px; border-right: 2px solid #e0e0e0; }
.sidebar ul { display: grid; gap: 10px; }
.sidebar a { display: flex; align-items: center; gap: 9px; height: 60px; padding-left: 14px; color: #111; }
.sidebar a.active { padding-left: 8px; color: #2b93e6; }
.ico { display: flex; justify-content: center; width: 38px; }
.collapse { position: absolute; z-index: 2; right: -24px; top: 26px; width: 48px; height: 48px; border-radius: 50%; background: #fff; box-shadow: 0 4px 10px rgba(0,0,0,.35); display: grid; place-items: center; }

/* work area */
.work { flex: 1; min-width: 0; display: flex; flex-direction: column; }
.toolbar { display: flex; align-items: center; height: 99px; padding: 0 57px 0 51px; border-bottom: 2px solid #e0e0e0; }
h1 { width: 267px; font-size: 28px; line-height: 36px; color: #d8642c; }
.datebox { display: flex; width: 485px; height: 60px; }
.datebox button { display: grid; place-items: center; }
.cal { width: 77px; border-right: 2px solid #e4e4e4; }
.prev { width: 62px; border-right: 2px solid #e4e4e4; }
.datebox input { flex: 1; min-width: 0; padding: 0 24px; background: #f8f8f8; }
.next { width: 57px; border-left: 2px solid #e4e4e4; }
.create { display: flex; align-items: center; gap: 18px; height: 60px; margin-left: auto; padding: 0 16px 0 17px; background: #046bb1; color: #fff; font-weight: 700; font-size: 19px; white-space: nowrap; }
.add { display: grid; place-items: center; width: 53px; height: 53px; margin-left: 4px; border-radius: 50%; background: #046bb1; }

.split { flex: 1; display: grid; grid-template-columns: minmax(0, 19fr) minmax(0, 22fr); }

/* map */
.map { position: relative; overflow: hidden; background: #e8eaed; border-right: 1px solid #d8d8d8; }
.canvas { position: absolute; inset: 0; width: 100%; height: 100%; }
.tile path { fill: none; stroke-linejoin: round; vector-effect: non-scaling-stroke; }
.tile .park { fill: #b6e0c3; }
.tile .shop { fill: #fdf2d3; }
.tile .hosp { fill: #f8dfe0; }
.tile .shade { fill: #dfe1e5; }
.tile .yard { fill: #d0d3d9; }
.tile .water { fill: #9fbff8; }
.tile .rail { stroke: #d3d5d9; stroke-width: 5px; }
.tile .rail-thin { stroke: #d3d5d9; stroke-width: 2px; }
.tile .canal { stroke: #9fbff8; stroke-width: 7px; }
.tile .wide { stroke-width: 14px; }
.tile .river { stroke: #9fbff8; stroke-width: 20px; }
.tile .green { stroke: #7cc79a; stroke-width: 1px; }
.tile .parklines { stroke: #d9f0df; stroke-width: 1px; }
.tile .thin { stroke: #f8f9fa; stroke-width: 1px; }
.tile .minor { stroke: #fff; stroke-width: 2px; }
.tile .mid { stroke: #fff; stroke-width: 4px; }
.tile .major { stroke: #fff; stroke-width: 6px; }
.tile .mway { stroke: #f0a93c; stroke-width: 13px; }
.tile .mway-in { stroke: #fddc85; stroke-width: 9px; }
.canvas text { font-family: Roboto, sans-serif; paint-order: stroke; stroke: #fff; stroke-width: 3px; stroke-linejoin: round; }
.canvas .street text { font-size: 17px; fill: #5a5d61; stroke: #f3f4f6; }
.canvas .street .riv { font-size: 20px; fill: #1f63cf; stroke: #d8e6fd; }
.canvas .town text { font-size: 27px; fill: #202124; }
.canvas .town .city { font-size: 34px; font-weight: 500; text-anchor: end; }
.canvas .area text { font-size: 21px; fill: #55585c; letter-spacing: 2px; text-anchor: middle; font-weight: 500; }
.canvas .area .start { text-anchor: start; }
.canvas .place text { font-size: 23px; }
.canvas .slate text { font-size: 22px; }
.canvas .slate { fill: #5b7888; }
.canvas .leaf { fill: #1b8444; font-weight: 500; }
.canvas .teal { fill: #0b8590; font-weight: 500; }
.canvas .end { text-anchor: end; }
.canvas .mid-a { text-anchor: middle; }
.shield rect { fill: #fddb5a; stroke: #e3ba35; }
.canvas .shield text { font-size: 15px; fill: #3b2f00; stroke: none; text-anchor: middle; }
.shield.blue rect { fill: #3a74bf; stroke: none; }
.canvas .blue text { fill: #fff; font-weight: 500; }

.draw { position: absolute; left: 14px; top: 14px; width: 53px; height: 53px; border-radius: 50%; background: #046bb1; display: grid; place-items: center; }
.expand { position: absolute; z-index: 1; right: 0; top: 1px; width: 54px; height: 82px; padding-left: 6px; border-radius: 3px; background: #046bb1; display: grid; place-items: center; }
.warning { position: absolute; left: 14px; right: 13px; top: 81px; padding: 21px 24px 22px 34px; border-left: 8px solid #c47116; background: rgba(255,206,94,.65); color: #bb6f1e; font-weight: 600; line-height: 30px; text-shadow: 0 0 3px #fff, 0 0 3px #fff; }
.zoom { position: absolute; right: 17px; bottom: 577px; width: 66px; padding: 0 8px; background: #fff; box-shadow: 0 1px 4px rgba(0,0,0,.25); }
.zoom button { display: grid; place-items: center; width: 100%; height: 67px; }
.zoom button + button { border-top: 2px solid #e6e6e6; }
.google { position: absolute; left: 17px; bottom: 4px; font: 500 29px/34px Roboto, sans-serif; color: #fff; -webkit-text-stroke: 5px #a0a3a8; paint-order: stroke; }
.credits { position: absolute; right: 0; bottom: 0; display: flex; align-items: center; gap: 6px; height: 22px; padding: 0 12px 0 219px; background: rgba(245,245,245,.75); color: #111; font: 500 17px/22px Roboto, sans-serif; }
.credits a { margin: 0 16px; }
.data { position: absolute; left: 9px; top: 14px; }
.scale { width: 134px; height: 10px; border: 3px solid #666; border-top: 0; }

/* agents panel */
.panel { padding: 14px 12px 14px 15px; }
.options { display: flex; align-items: center; gap: 15px; height: 43px; margin-left: 4px; padding: 0 35px 0 37px; border-radius: 22px; background: #efefef; color: #666; }
.group { margin-top: 14px; background: #f9f9fb; }
.grouphead { display: flex; justify-content: space-between; align-items: center; width: 100%; height: 56px; padding: 0 36px 0 106px; background: #046bb1; color: #fff; font-weight: 700; font-size: 19px; }
.grouphead svg { margin-bottom: 10px; }
.card { margin: 14px 2px; border: 2px solid #e3e3e3; background: #fff; }
.card header { display: flex; align-items: center; height: 68px; padding: 0 13px 0 66px; background: #efefef; }
.dot { width: 34px; height: 34px; margin-right: 13px; border: 2px solid #111; border-radius: 50%; }
.green-dot { background: #6fe2ad; }
.purple-dot { background: #a780e8; }
.blue-dot { background: #4a74f0; }
h2 { font-size: 20px; line-height: 28px; color: #111; }
.free { margin-left: auto; padding: 0 10px; border-radius: 3px; background: #e2e1f3; color: #7566d6; font-weight: 700; font-size: 16px; line-height: 32px; }
.card ul { display: grid; grid-template-columns: repeat(7, 1fr); padding-left: 4px; }
.card li { display: flex; justify-content: center; align-items: center; gap: 4px; height: 69px; color: #666; font-size: 18px; }
.card li.sp { gap: 8px; }
.card li.wide-sp { gap: 10px; }

.help { position: absolute; right: 31px; bottom: 22px; display: flex; align-items: center; justify-content: center; gap: 14px; width: 180px; height: 77px; border-radius: 39px; background: #1660f8; color: #fff; font: 700 26px/32px Inter, sans-serif; }
```
